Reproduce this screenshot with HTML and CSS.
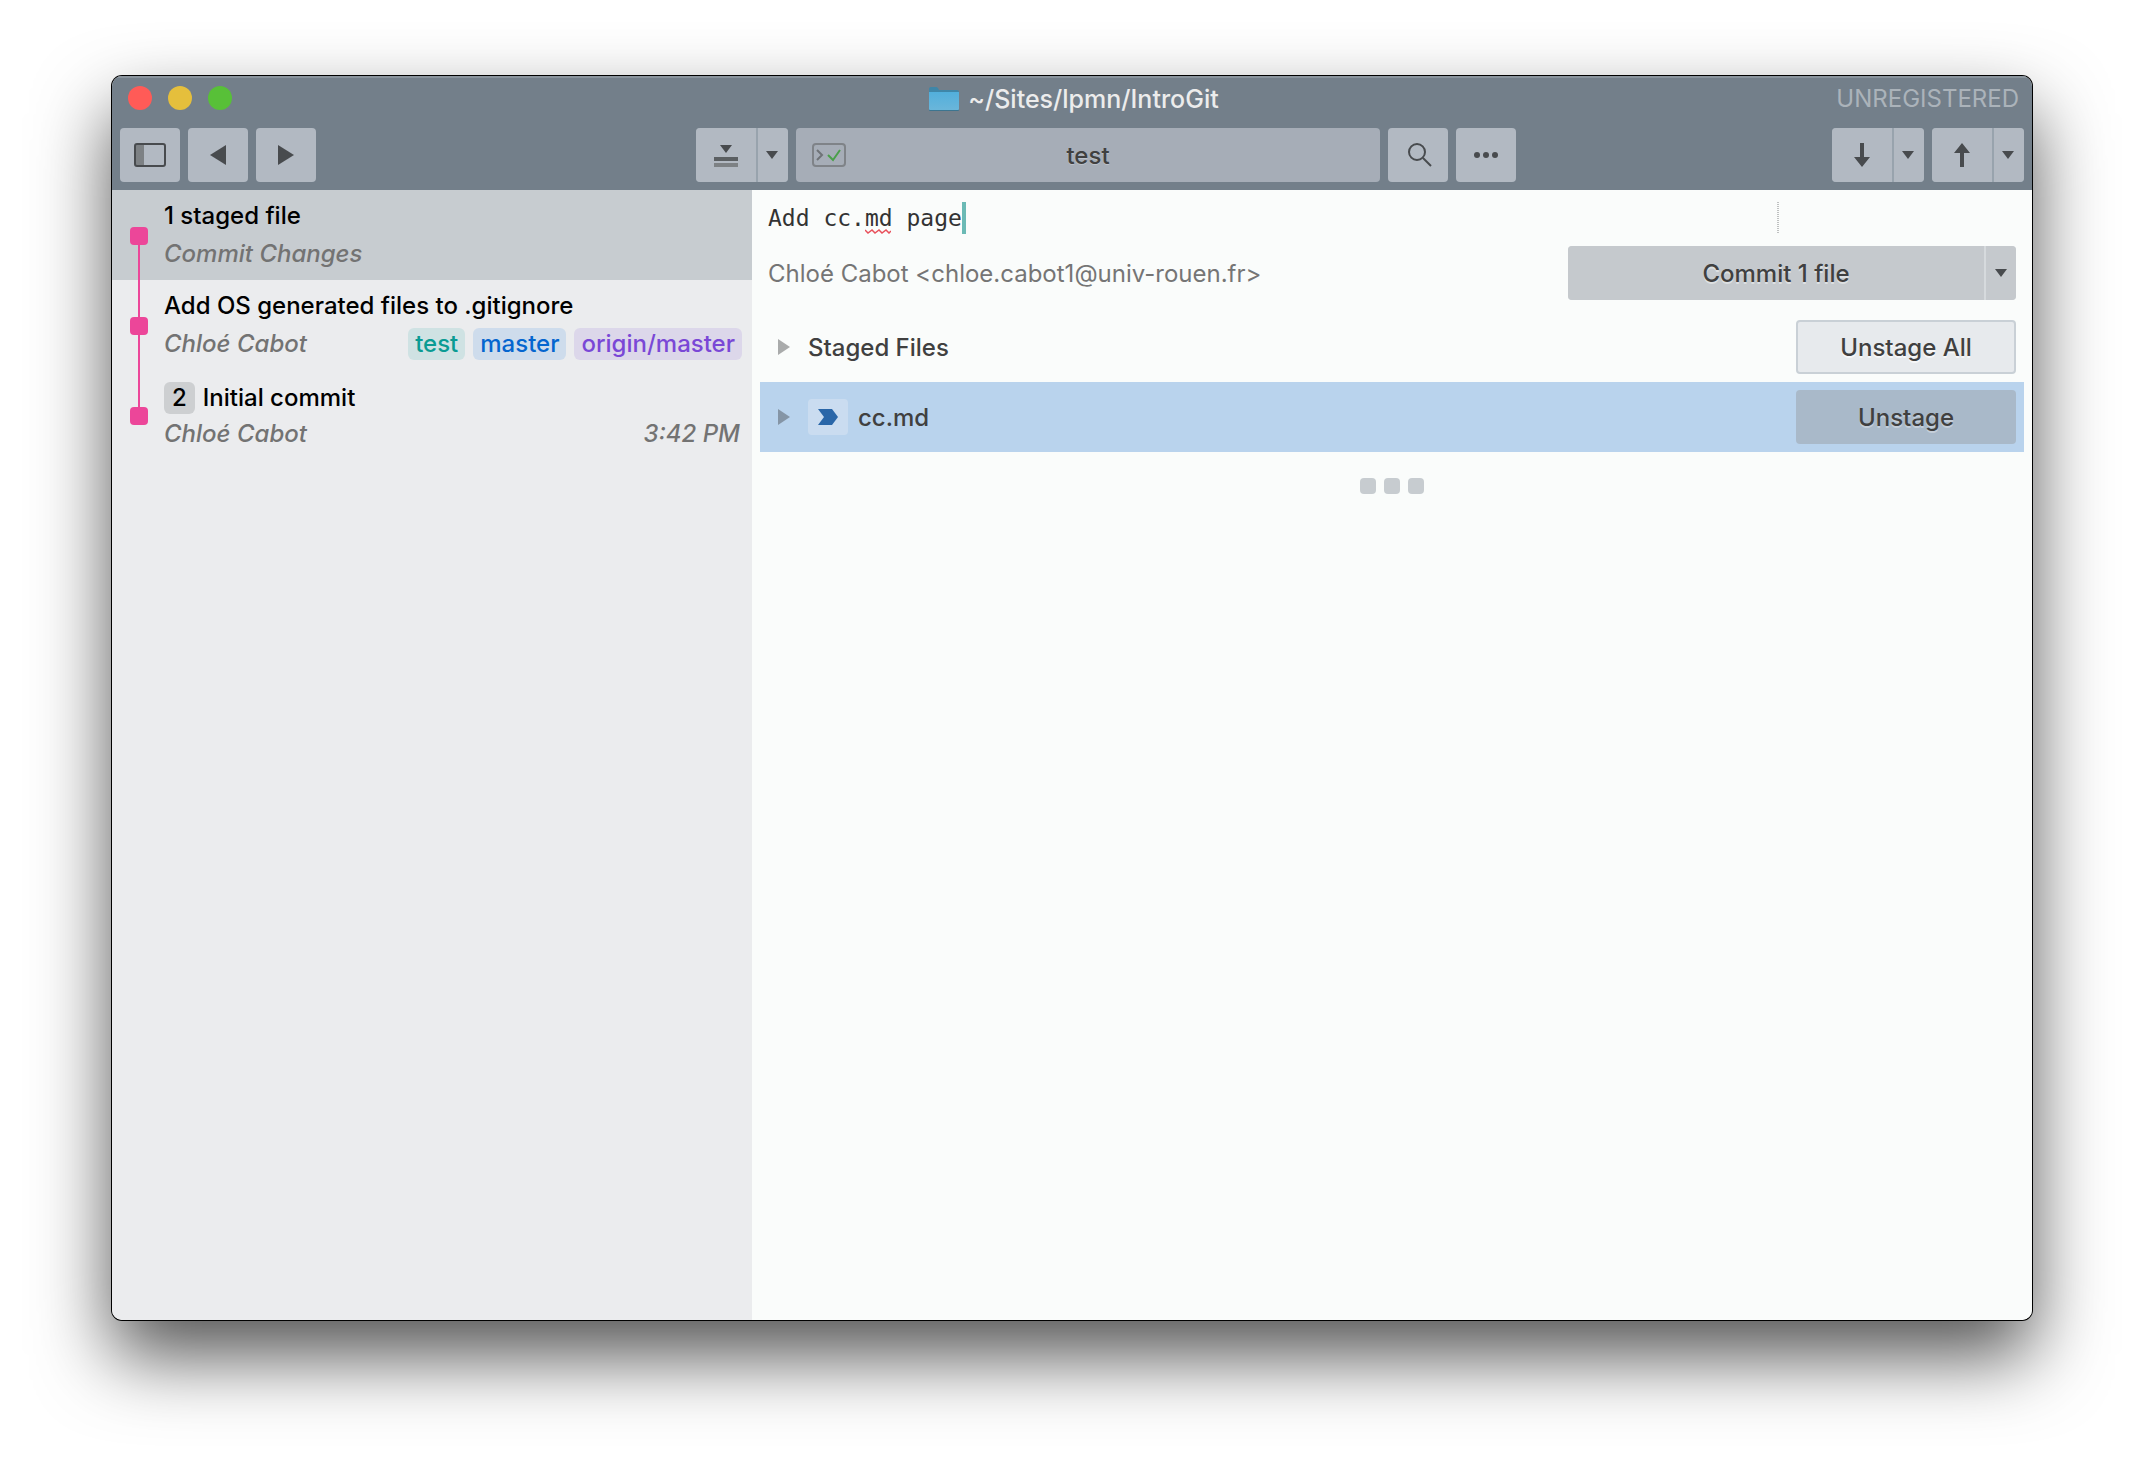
FILE: index.html
```html
<!DOCTYPE html>
<html lang="en">
<head>
<meta charset="utf-8">
<title>~/Sites/lpmn/IntroGit</title>
<link rel="stylesheet" href="styles.css">
</head>
<body>
<main class="window">
  <header class="chrome">
    <div class="titlebar">
      <div class="lights">
        <button class="light light-close" aria-label="Close"></button>
        <button class="light light-minimize" aria-label="Minimize"></button>
        <button class="light light-zoom" aria-label="Zoom"></button>
      </div>
      <h1 class="title">
        <svg width="32" height="28" viewBox="0 0 32 28" aria-hidden="true">
          <defs><linearGradient id="folder" x1="0" y1="0" x2="0" y2="1"><stop offset="0" stop-color="#52afdc"/><stop offset="1" stop-color="#6ab6da"/></linearGradient></defs>
          <path d="M1 8V4q0-2 2-2h5q1 0 2 1l1 2h18q2 0 2 2v1z" fill="#3f86a8"/>
          <path d="M1 7h30v18q0 1-1 1H2q-1 0-1-1z" fill="#3c7590"/>
          <path d="M1 7h30v17q0 1-1 1H2q-1 0-1-1z" fill="url(#folder)"/>
        </svg>
        <span>~/Sites/lpmn/IntroGit</span>
      </h1>
      <span class="license">UNREGISTERED</span>
    </div>
    <nav class="toolbar" aria-label="Repository">
      <div class="group">
        <button class="tool" aria-label="Toggle sidebar"><svg width="32" height="24" viewBox="0 0 32 24"><path d="M2 2h8v20H2z" fill="#7d8184"/><rect x="1" y="1" width="30" height="22" rx="2" fill="none" stroke="#484b4e" stroke-width="2"/></svg></button>
        <button class="tool" aria-label="Back"><svg width="16" height="20" viewBox="0 0 16 20"><path d="M16 0v20L0 10z" fill="#484b4e"/></svg></button>
        <button class="tool" aria-label="Forward"><svg width="16" height="20" viewBox="0 0 16 20"><path d="M0 0v20l16-10z" fill="#484b4e"/></svg></button>
      </div>
      <div class="group group-center">
        <div class="split">
          <button class="tool" aria-label="Stash"><svg width="24" height="24" viewBox="0 0 24 24"><path d="M6 2h12l-6 8z" fill="#484b4e"/><path d="M0 14h24v4H0z" fill="#5b5f62"/><path d="M0 20h24v4H0z" fill="#7d8184"/></svg></button>
          <button class="tool tool-menu" aria-label="Stash options"><svg width="12" height="8" viewBox="0 0 12 8"><path d="M0 0h12L6 8z" fill="#484b4e"/></svg></button>
        </div>
        <button class="location">
          <svg class="location-icon" width="34" height="24" viewBox="0 0 34 24"><rect x="1" y="1" width="32" height="22" rx="3" fill="none" stroke="#7f8388" stroke-width="2"/><path d="M5 7l5 5-5 5" fill="none" stroke="#6f7377" stroke-width="2"/><path d="M16 12l5 5 7-10" fill="none" stroke="#4a9f4a" stroke-width="2"/></svg>
          <span>test</span>
        </button>
        <button class="tool" aria-label="Search"><svg width="28" height="24" viewBox="0 0 28 24"><circle cx="13" cy="9" r="8" fill="none" stroke="#484b4e" stroke-width="2"/><path d="M19 15l8 8" stroke="#484b4e" stroke-width="2"/></svg></button>
        <button class="tool" aria-label="More"><svg width="24" height="6" viewBox="0 0 24 6"><g fill="#484b4e"><circle cx="3" cy="3" r="3"/><circle cx="12" cy="3" r="3"/><circle cx="21" cy="3" r="3"/></g></svg></button>
      </div>
      <div class="group">
        <div class="split">
          <button class="tool" aria-label="Pull"><svg width="16" height="24" viewBox="0 0 16 24"><path d="M6 0h4v14h6l-8 10-8-10h6z" fill="#484b4e"/></svg></button>
          <button class="tool tool-menu" aria-label="Pull options"><svg width="12" height="8" viewBox="0 0 12 8"><path d="M0 0h12L6 8z" fill="#484b4e"/></svg></button>
        </div>
        <div class="split">
          <button class="tool" aria-label="Push"><svg width="16" height="24" viewBox="0 0 16 24"><path d="M6 24h4V10h6L8 0 0 10h6z" fill="#484b4e"/></svg></button>
          <button class="tool tool-menu" aria-label="Push options"><svg width="12" height="8" viewBox="0 0 12 8"><path d="M0 0h12L6 8z" fill="#484b4e"/></svg></button>
        </div>
      </div>
    </nav>
  </header>
  <div class="content">
    <aside class="sidebar" aria-label="Commits">
      <ol class="commits">
        <li class="commit commit-selected">
          <span class="graph graph-first"></span>
          <div class="commit-body">
            <div class="subject">1 staged file</div>
            <div class="meta"><em>Commit Changes</em></div>
          </div>
        </li>
        <li class="commit">
          <span class="graph"></span>
          <div class="commit-body">
            <div class="subject">Add OS generated files to .gitignore</div>
            <div class="meta"><em>Chloé Cabot</em>
              <div class="refs"><span class="ref ref-local">test</span><span class="ref ref-branch">master</span><span class="ref ref-remote">origin/master</span></div>
            </div>
          </div>
        </li>
        <li class="commit">
          <span class="graph graph-last"></span>
          <div class="commit-body commit-body-badged">
            <div class="subject"><span class="count">2</span>Initial commit</div>
            <div class="meta"><em>Chloé Cabot</em><em class="time">3:42 PM</em></div>
          </div>
        </li>
      </ol>
    </aside>
    <section class="details" aria-label="Commit changes">
      <form class="commit-form">
        <div class="message">
          <input class="message-input" type="text" aria-label="Commit message" value="Add cc.md page" spellcheck="false">
          <svg class="misspelling" width="26" height="5" viewBox="0 0 26 5" aria-hidden="true"><path d="M0 1l3 3 4-3 3 3 4-3 3 3 4-3 3 3 2-2" fill="none" stroke="#e8505b" stroke-width="1.5"/></svg>
          <span class="caret"></span>
          <span class="ruler"></span>
        </div>
        <div class="author-row">
          <span class="author">Chloé Cabot &lt;chloe.cabot1@univ-rouen.fr&gt;</span>
          <div class="split commit-split">
            <button type="button" class="btn btn-commit">Commit 1 file</button>
            <button type="button" class="btn btn-commit-menu" aria-label="Commit options"><svg width="12" height="8" viewBox="0 0 12 8"><path d="M0 0h12L6 8z" fill="#484b4e"/></svg></button>
          </div>
        </div>
      </form>
      <div class="files">
        <div class="file-row">
          <svg class="disclosure" width="12" height="16" viewBox="0 0 12 16"><path d="M0 0v16l12-8z" fill="#a9abab"/></svg>
          <h2 class="file-name">Staged Files</h2>
          <button class="btn btn-outline">Unstage All</button>
        </div>
        <div class="file-row file-row-selected">
          <svg class="disclosure" width="12" height="16" viewBox="0 0 12 16"><path d="M0 0v16l12-8z" fill="#8595a6"/></svg>
          <span class="status"><svg width="20" height="16" viewBox="0 0 20 16"><path d="M0 0h14l6 8-6 8H0l6-8z" fill="#2966a8"/></svg></span>
          <span class="file-name">cc.md</span>
          <button class="btn btn-unstage">Unstage</button>
        </div>
        <div class="more"><i></i><i></i><i></i></div>
      </div>
    </section>
  </div>
</main>
</body>
</html>
```
FILE: styles.css
```css
* { box-sizing: border-box; }

body {
  margin: 0;
  min-height: 100vh;
  padding: 76px 112px 148px;
  display: flex;
  background: #fff;
  font: 500 24px/32px Inter, "Liberation Sans", sans-serif;
  color: #404040;
}

button {
  margin: 0;
  padding: 0;
  border: 0;
  font: inherit;
  color: inherit;
}

svg { display: block; flex: none; }

h1, h2 { margin: 0; font: inherit; }

.window {
  flex: 1;
  min-width: 0;
  display: flex;
  flex-direction: column;
  border-radius: 10px;
  overflow: hidden;
  box-shadow: 0 0 0 1px #000, 0 36px 76px rgba(0, 0, 0, .68);
}

/* Title bar and toolbar */
.chrome {
  padding: 0 8px 8px;
  background: #737f8a;
  box-shadow: inset 0 2px 0 #8a949d;
}

.titlebar {
  height: 52px;
  padding: 0 5px 6px 8px;
  display: grid;
  grid-template-columns: 1fr auto 1fr;
  align-items: center;
}

.lights { display: flex; gap: 16px; padding-bottom: 2px; }
.light { width: 24px; height: 24px; border-radius: 50%; }
.light-close { background: #ff5b57; }
.light-minimize { background: #e5bf3c; }
.light-zoom { background: #58c038; }

.title {
  display: flex;
  align-items: center;
  gap: 8px;
  font-size: 25px;
  color: #ececec;
}

.license { justify-self: end; font-weight: 400; color: #abb3ba; }

.toolbar {
  display: flex;
  justify-content: space-between;
}

.group { display: flex; gap: 8px; }
.group-center { margin-left: 64px; }
.split { display: flex; gap: 2px; background: #98a3ad; border-radius: 4px; overflow: hidden; }

.tool {
  width: 60px;
  height: 54px;
  display: flex;
  align-items: center;
  justify-content: center;
  background: #b2b9c2;
  border-radius: 4px;
}

.split .tool { border-radius: 0; }
.split .tool-menu { width: 30px; padding-right: 2px; }

.location {
  width: 584px;
  height: 54px;
  padding: 0 16px;
  display: grid;
  grid-template-columns: 1fr auto 1fr;
  align-items: center;
  background: #a6adb7;
  border-radius: 4px;
  text-shadow: 0 1px 0 #bcc2ca;
}
.location span { padding-top: 2px; }

/* Body */
.content {
  flex: 1;
  display: grid;
  grid-template-columns: 1fr 2fr;
}

.sidebar { background: #ebecee; }
.details { background: #fafcfb; }

.commits { margin: 0; padding: 0; list-style: none; }
.commit { height: 90px; display: flex; color: #000; }
.commit-selected { background: #c7ccd0; }

.graph {
  width: 52px;
  padding-left: 18px;
  display: flex;
  flex-direction: column;
  background: linear-gradient(#ec4699, #ec4699) 26px 0 / 2px 100% no-repeat;
}
.graph-first { background-size: 2px 50%; background-position: 26px 100%; }
.graph-last { background-size: 2px 50%; }
.graph::before {
  content: "";
  margin-top: 37px;
  width: 18px;
  height: 18px;
  border-radius: 4px;
  background: #ec4699;
}

.commit-body {
  flex: 1;
  padding: 10px 10px 10px 0;
  display: flex;
  flex-direction: column;
  justify-content: space-between;
}
.commit-body-badged { padding-top: 12px; }

.subject, .meta { display: flex; }
.meta { justify-content: space-between; color: #737373; }
.time { padding-right: 2px; }

.count {
  padding: 0 8px;
  margin-right: 8px;
  border-radius: 6px;
  background: #cdcfd1;
}

.refs { display: flex; gap: 8px; font-style: normal; }
.ref { padding: 0 7px; border-radius: 6px; }
.ref-local { background: #cfe2e3; color: #0a9b93; }
.ref-branch { background: #cedcec; color: #0566cf; }
.ref-remote { background: #dcd7ea; color: #7a48d6; }

/* Commit form */
.commit-form { padding: 12px 16px; }

.message {
  position: relative;
  margin-bottom: 12px;
  font: 23px/32px "DejaVu Sans Mono", monospace;
}

.message-input {
  display: block;
  width: 100%;
  height: 32px;
  padding: 0;
  border: 0;
  outline: 0;
  background: none;
  font: inherit;
  color: #333;
}

.misspelling { position: absolute; left: 7ch; bottom: 0; }
.caret { position: absolute; left: 14ch; top: 0; width: 4px; height: 32px; background: #6bbab5; }
.ruler {
  position: absolute;
  left: calc(72ch + 12px);
  top: 0;
  width: 2px;
  height: 32px;
  background: repeating-linear-gradient(#bfc1c1 0 1px, transparent 1px 2px);
}

.author-row { display: flex; align-items: center; justify-content: space-between; }
.author { padding-top: 2px; font-weight: 400; color: #757575; }

.btn { height: 54px; padding-top: 2px; border-radius: 4px; }
.commit-split { width: 448px; background: #d6dadd; }
.btn-commit, .btn-commit-menu { background: #c5c9cd; border-radius: 0; }
.btn-commit { flex: 1; text-shadow: 0 2px 0 #dde0e2; }
.btn-commit-menu { width: 30px; padding: 0; display: flex; align-items: center; justify-content: center; }

/* Files */
.files { padding: 0 8px; }
.file-row {
  height: 70px;
  padding: 0 8px 0 18px;
  display: flex;
  align-items: center;
}
.file-row-selected { background: #b9d3ed; }
.disclosure { margin-right: 18px; }
.status {
  width: 40px;
  height: 36px;
  margin-right: 10px;
  display: flex;
  align-items: center;
  justify-content: center;
  background: #cadcf0;
  border-radius: 4px;
}
.file-name { flex: 1; padding-top: 1px; }
.file-row .btn { width: 220px; }
.btn-outline { background: #e7eaed; border: 2px solid #c9d0d6; text-shadow: 0 2px 0 #f6f7f8; }
.btn-unstage { background: #a9b9c9; text-shadow: 0 2px 0 #c4ced9; }

.more { padding-top: 26px; display: flex; justify-content: center; gap: 8px; }
.more i { width: 16px; height: 16px; border-radius: 4px; background: #c7ccd0; }
```
